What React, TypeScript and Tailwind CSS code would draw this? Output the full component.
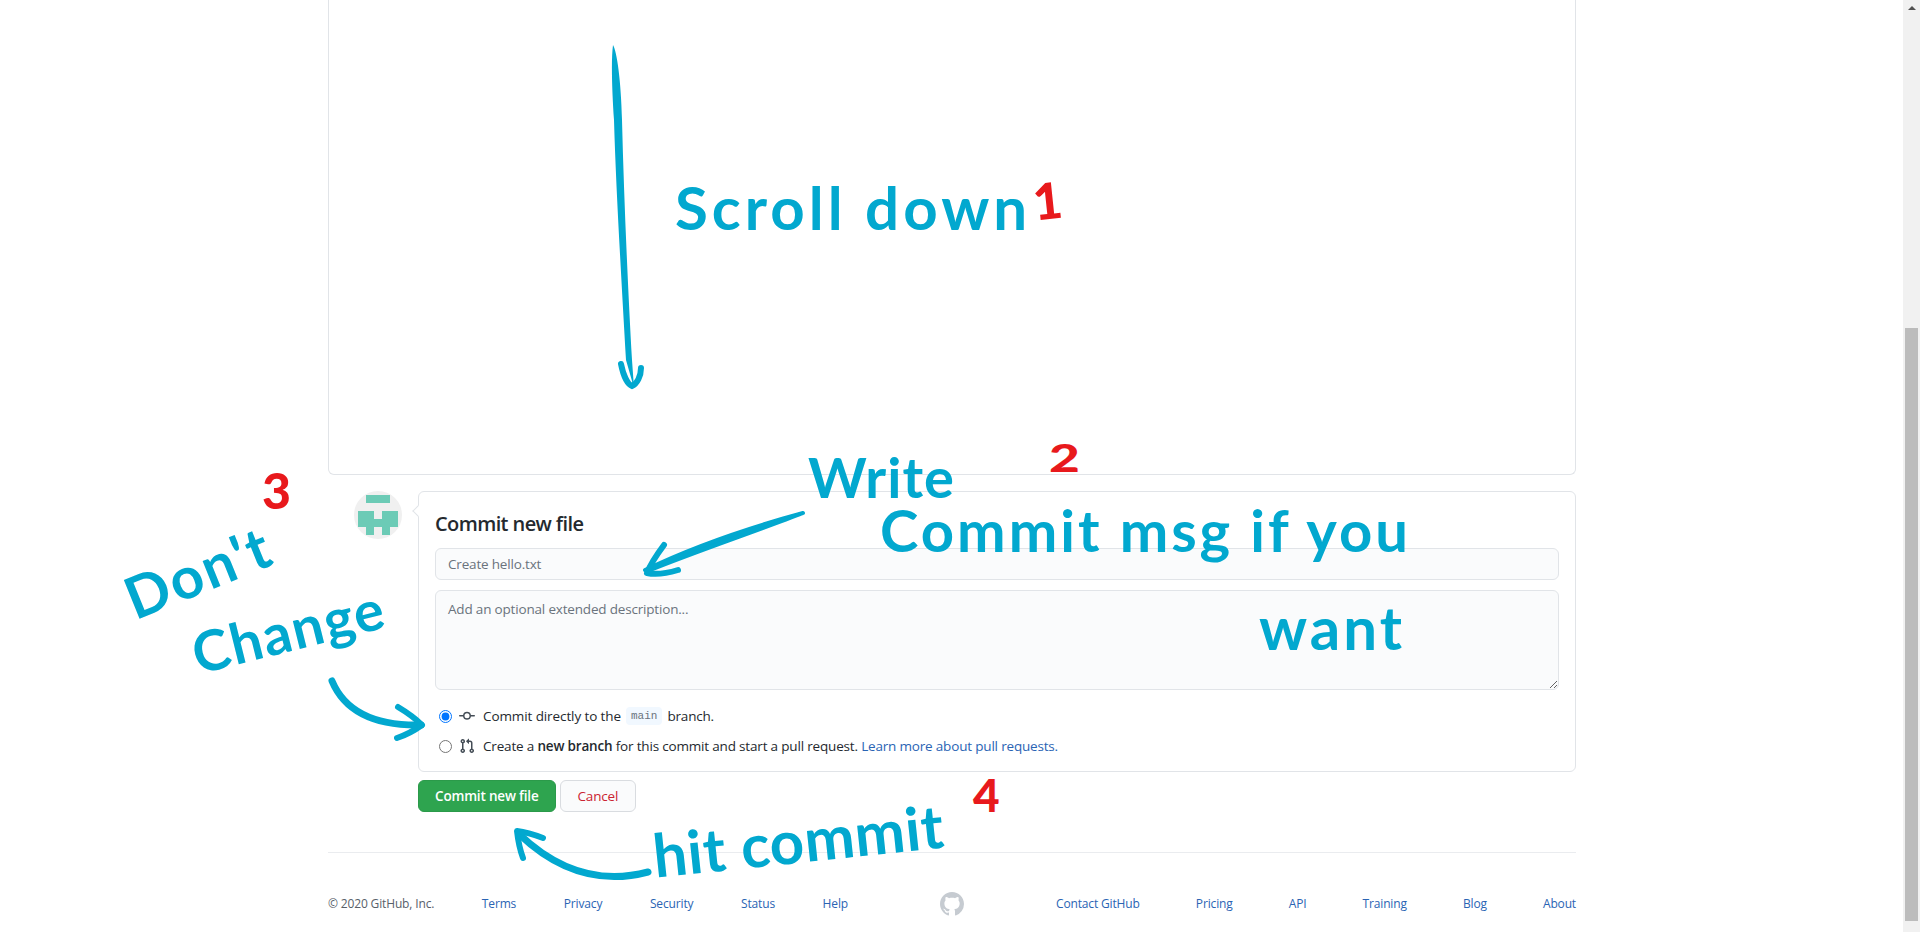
import React from "react";

const gitCommit = "M10.5 7.75a2.5 2.5 0 11-5 0 2.5 2.5 0 015 0zm1.43.75a4.002 4.002 0 01-7.86 0H.75a.75.75 0 110-1.5h3.32a4.001 4.001 0 017.86 0h3.32a.75.75 0 110 1.5h-3.32z";
const gitPr = "M7.177 3.073L9.573.677A.25.25 0 0110 .854v4.792a.25.25 0 01-.427.177L7.177 3.427a.25.25 0 010-.354zM3.75 2.5a.75.75 0 100 1.5.75.75 0 000-1.5zm-2.25.75a2.25 2.25 0 113 2.122v5.256a2.251 2.251 0 11-1.5 0V5.372A2.25 2.25 0 011.5 3.25zM11 2.5h-1V4h1a1 1 0 011 1v5.628a2.251 2.251 0 101.5 0V5A2.5 2.5 0 0011 2.5zm1 10.25a.75.75 0 111.5 0 .75.75 0 01-1.5 0zM3.75 12a.75.75 0 100 1.5.75.75 0 000-1.5z";
const mark = "M8 0C3.58 0 0 3.58 0 8c0 3.54 2.29 6.53 5.47 7.59.4.07.55-.17.55-.38 0-.19-.01-.82-.01-1.49-2.01.37-2.53-.49-2.69-.94-.09-.23-.48-.94-.82-1.13-.28-.15-.68-.52-.01-.53.63-.01 1.08.58 1.23.82.72 1.21 1.87.87 2.33.66.07-.52.28-.87.51-1.07-1.78-.2-3.64-.89-3.64-3.95 0-.87.31-1.59.82-2.15-.08-.2-.36-1.02.08-2.12 0 0 .67-.21 2.2.82.64-.18 1.32-.27 2-.27.68 0 1.36.09 2 .27 1.53-1.04 2.2-.82 2.2-.82.44 1.1.16 1.92.08 2.12.51.56.82 1.27.82 2.15 0 3.07-1.87 3.75-3.65 3.95.29.25.54.73.54 1.48 0 1.07-.01 1.93-.01 2.2 0 .21.15.46.55.38A8.013 8.013 0 0016 8c0-4.42-3.58-8-8-8z";

function Octicon({ d, className }: { d: string; className: string }) {
  return (
    <svg viewBox="0 0 16 16" className={className} fill="currentColor" aria-hidden="true">
      <path fillRule="evenodd" d={d} />
    </svg>
  );
}

function Avatar() {
  return (
    <svg viewBox="0 0 48 48" className="w-12 h-12 shrink-0 rounded-full bg-[#f0f0f0]" aria-hidden="true">
      <g fill="#6ccbb6">
        <rect x="12" y="4" width="24" height="8" />
        <rect x="4" y="20" width="16" height="8" />
        <rect x="28" y="20" width="16" height="8" />
        <rect x="4" y="28" width="40" height="8" />
        <rect x="12" y="36" width="8" height="8" />
        <rect x="28" y="36" width="8" height="8" />
      </g>
    </svg>
  );
}

function Arrows() {
  return (
    <svg className="absolute left-0 top-0 w-[1903px] h-[932px] pointer-events-none" viewBox="0 0 1903 932" fill="none" aria-hidden="true">
      <path d="M613 45 C617 52 621 80 622 120 C624 200 628 290 632 360 L634 388 L626 360 C622 290 616 190 614 120 C612 90 611 60 613 45Z" fill="#02a8cf" />
      <path d="M621 364 C623 374 627 384 632 386 C637 384 641 376 641 368" stroke="#02a8cf" strokeWidth="6" strokeLinecap="round" />
      <path d="M803 513 C760 530 700 550 648 571 L645 570 C695 546 755 526 803 513Z" fill="#02a8cf" stroke="#02a8cf" strokeWidth="4" strokeLinejoin="round" />
      <path d="M664 545 C658 553 651 563 647 573 C656 575 668 573 678 570" stroke="#02a8cf" strokeWidth="6" strokeLinecap="round" strokeLinejoin="round" />
      <path d="M332 681 C345 712 375 726 421 725" stroke="#02a8cf" strokeWidth="7" strokeLinecap="round" />
      <path d="M398 707 C408 713 416 719 422 725 C415 730 406 735 397 738" stroke="#02a8cf" strokeWidth="6" strokeLinecap="round" strokeLinejoin="round" />
      <path d="M648 872 C610 882 565 878 519 834" stroke="#02a8cf" strokeWidth="7" strokeLinecap="round" />
      <path d="M543 838 C535 835 525 832 517 831 C518 840 520 850 523 858" stroke="#02a8cf" strokeWidth="6" strokeLinecap="round" strokeLinejoin="round" />
    </svg>
  );
}

const hand = "absolute whitespace-nowrap leading-none font-['Lato',sans-serif] font-bold text-[#02a8cf] origin-left";
const red = "absolute whitespace-nowrap leading-none font-['Lato',sans-serif] font-black text-[#e8191c]";

function Notes() {
  return (
    <>
      <Arrows />
      <span className={`${hand} left-[675px] top-[177px] text-[60px] tracking-[4px]`}>Scroll down</span>
      <span className={`${red} left-[1033px] top-[175px] text-[50px] rotate-[-6deg]`}>1</span>
      <span className={`${hand} left-[808px] top-[449px] text-[56px] tracking-[1px]`}>Write</span>
      <span className={`${red} left-[1049px] top-[438px] text-[38px] origin-left scale-x-[1.4]`}>2</span>
      <span className={`${hand} left-[880px] top-[501px] text-[58px] tracking-[3px]`}>Commit msg if you</span>
      <span className={`${hand} left-[1259px] top-[597px] text-[60px] tracking-[3px]`}>want</span>
      <span className={`${red} left-[262px] top-[465px] text-[50px]`}>3</span>
      <span className={`${hand} left-[127px] top-[571px] text-[58px] tracking-[2px] rotate-[-22deg]`}>Don't</span>
      <span className={`${hand} left-[193px] top-[626px] text-[56px] tracking-[1.5px] rotate-[-14deg]`}>Change</span>
      <span className={`${hand} left-[653px] top-[825px] text-[60px] tracking-[0.5px] rotate-[-6deg]`}>hit commit</span>
      <span className={`${red} left-[973px] top-[772px] text-[46px]`}>4</span>
    </>
  );
}

function Footer() {
  const link = "text-[#2a64b4]";
  return (
    <footer className="mt-10 border-t border-[#eaecef] pt-[39px] flex justify-between items-center text-xs tracking-[-0.15px] text-[#586069]">
      <ul className="flex justify-between w-[520px]">
        <li>© 2020 GitHub, Inc.</li>
        {["Terms", "Privacy", "Security", "Status", "Help"].map((t) => (
          <li key={t} className={link}>{t}</li>
        ))}
      </ul>
      <Octicon d={mark} className="w-6 h-6 text-[#c6cbd1]" />
      <ul className="flex justify-between w-[520px]">
        {["Contact GitHub", "Pricing", "API", "Training", "Blog", "About"].map((t) => (
          <li key={t} className={link}>{t}</li>
        ))}
      </ul>
    </footer>
  );
}

function CommitForm() {
  return (
    <div className="mt-4 flex items-start pl-[26px]">
      <Avatar />
      <div className="ml-4 flex-1 min-w-0">
        <div className="relative border border-[#e1e4e8] rounded-md bg-white px-4 pt-4 pb-4 h-[281px]">
          <span className="absolute left-[-5px] top-[15px] w-2 h-2 rotate-45 bg-white border-l border-b border-[#e1e4e8]" />
          <h3 className="mt-1 text-[20px] leading-[24px] tracking-[-0.6px] font-semibold text-[#24292e]">Commit new file</h3>
          <input
            readOnly
            placeholder="Create hello.txt"
            className="mt-3 block w-full h-8 px-3 rounded-md border border-[#e1e4e8] bg-[#fafbfc] placeholder:text-[#6a737d] outline-none"
          />
          <textarea
            readOnly
            placeholder="Add an optional extended description..."
            className="mt-[10px] block w-full h-[100px] px-3 py-2 rounded-md border border-[#e1e4e8] bg-[#fafbfc] placeholder:text-[#6a737d] outline-none"
          />
          <div className="mt-4 flex items-center h-5">
            <input type="radio" name="b" defaultChecked className="w-[13px] h-[13px] ml-1 shrink-0" />
            <Octicon d={gitCommit} className="w-4 h-4 ml-[7px] text-[#444d56]" />
            <span className="ml-2 text-[#24292e] tracking-[-0.1px]">Commit directly to the</span>
            <code className="mx-[5px] px-[5px] h-[18px] leading-[18px] rounded bg-[#f1f8ff] text-[11px] tracking-normal font-['Liberation_Mono',monospace] text-[#6a737d]">main</code>
            <span className="text-[#24292e]">branch.</span>
          </div>
          <div className="mt-[10px] flex items-center h-5">
            <input type="radio" name="b" className="w-[13px] h-[13px] ml-1 shrink-0" />
            <Octicon d={gitPr} className="w-4 h-4 ml-[7px] text-[#444d56]" />
            <span className="ml-2 text-[#24292e]">
              Create a <strong className="font-semibold">new branch</strong> for this commit and start a pull request.{" "}
              <a className="text-[#2a64b4]">Learn more about pull requests.</a>
            </span>
          </div>
        </div>
        <div className="mt-2 flex gap-1">
          <button className="h-8 px-4 rounded-md bg-[#2ea44f] text-white font-semibold border border-[#2b9a4a]">Commit new file</button>
          <button className="h-8 px-[17px] rounded-md bg-[#fafbfc] text-[#cb2431] border border-[#d9dce0]">Cancel</button>
        </div>
      </div>
    </div>
  );
}

function Scrollbar() {
  return (
    <div className="w-[17px] shrink-0 bg-[#f1f1f1] flex flex-col items-center">
      <div className="h-[328px] w-full flex justify-center pt-[6px]">
        <div className="w-0 h-0 border-x-[4px] border-x-transparent border-b-[4px] border-b-[#505050]" />
      </div>
      <div className="w-[13px] h-[593px] bg-[#bcbcbc]" />
    </div>
  );
}

export default function App() {
  return (
    <div className="relative h-[932px] w-full overflow-hidden flex bg-white text-[13.5px] tracking-[-0.18px] text-[#24292e] font-['Open_Sans',sans-serif]">
      <main className="flex-1 min-w-0">
        <div className="ml-[328px] w-[1248px]">
          <div className="h-[475px] border-x border-b border-[#e1e4e8] rounded-b-md bg-white" />
          <CommitForm />
          <Footer />
        </div>
      </main>
      <Scrollbar />
      <Notes />
    </div>
  );
}
